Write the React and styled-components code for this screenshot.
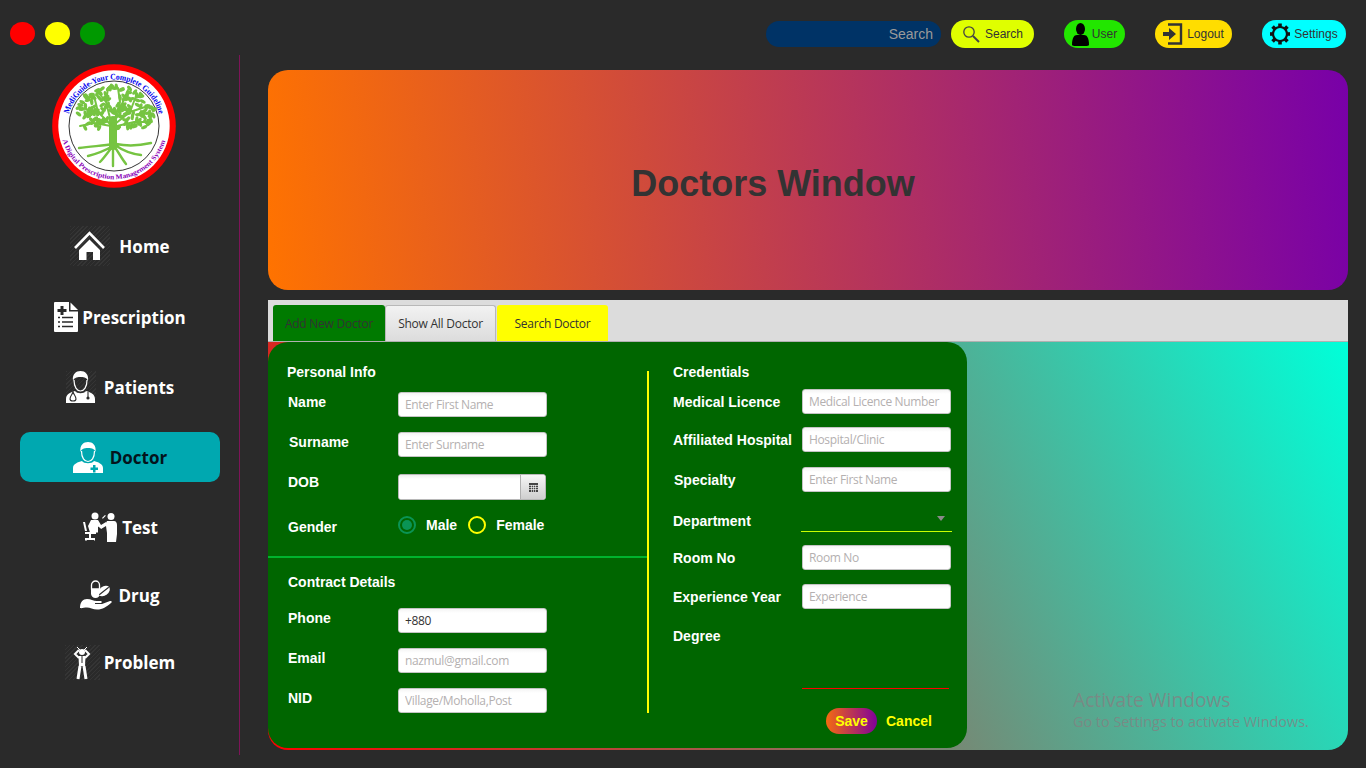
import React from "react";
import styled, { createGlobalStyle } from "styled-components";

const GlobalStyle = createGlobalStyle`
  html, body {
    margin: 0;
    height: 768px;
    overflow: hidden;
    background: #2a2a2a;
  }
  * { box-sizing: border-box; }
`;

const arial = `"Liberation Sans", Arial, sans-serif`;
const segoe = `"Open Sans", "Noto Sans", sans-serif`;

/* top bar */
const TopBar = styled.header`
  display: flex;
  align-items: center;
  height: 55px;
  padding: 20px 20px 7px 10px;
`;

const Dot = styled.span`
  width: 25px;
  height: 23px;
  border-radius: 50%;
  margin: 0 10px 1px 0;
  background: ${(p) => p.$color};
`;

const SearchPill = styled.div`
  width: 175px;
  height: 26px;
  margin-left: auto;
  padding-right: 8px;
  border-radius: 13px;
  background: #003366;
  color: #9a9a9a;
  font: 14px/26px ${arial};
  text-align: right;
`;

const TopButton = styled.button`
  display: flex;
  align-items: center;
  justify-content: center;
  gap: ${(p) => p.$gap}px;
  width: ${(p) => p.$w}px;
  height: 28px;
  margin-left: ${(p) => p.$left}px;
  padding: 0;
  border: 0;
  border-radius: 14px;
  background: ${(p) => p.$bg};
  color: #333;
  font: 12px ${arial};
`;

/* page body */
const Body = styled.div`
  display: grid;
  grid-template-columns: 240px 1fr;
`;

const Sidebar = styled.aside`
  height: 700px;
  border-right: 1px solid #7d1458;
`;

const Logo = styled.svg`
  display: block;
  width: 124px;
  height: 124px;
  margin: 9px 0 33px 52px;
`;

const Nav = styled.nav`
  display: flex;
  flex-direction: column;
  width: 200px;
  margin-left: 20px;
`;

const NavItem = styled.a`
  display: flex;
  align-items: center;
  justify-content: center;
  gap: ${(p) => p.$gap}px;
  height: 50px;
  margin-bottom: ${(p) => p.$after}px;
  border-radius: 10px;
  background: ${(p) => (p.$active ? "#00a8b0" : "transparent")};
  color: ${(p) => (p.$active ? "#04141c" : "#fff")};
  font: 700 17px ${segoe};
`;

const NavIcon = styled.svg`
  flex: none;
  background: ${(p) =>
    p.$hatch
      ? "repeating-linear-gradient(135deg, rgba(255,255,255,.05) 0 1px, transparent 1px 3px)"
      : "none"};
`;

const Main = styled.main`
  padding: 15px 18px 0 28px;
`;

const Banner = styled.section`
  display: flex;
  align-items: center;
  justify-content: center;
  height: 220px;
  margin-bottom: 10px;
  padding-right: 70px;
  border-radius: 20px;
  background: linear-gradient(84deg, #ff7300, #7800a8);
`;

const Title = styled.h1`
  margin: 7px 0 0;
  color: #333;
  font: bold 36px ${arial};
`;

/* tabs */
const TabBar = styled.div`
  display: flex;
  height: 42px;
  padding: 5px 0 0 5px;
  background: #dcdcdc;
  border-bottom: 1px solid #b0b0b0;
`;

const Tab = styled.div`
  display: flex;
  align-items: center;
  justify-content: center;
  width: ${(p) => p.$w}px;
  height: 36px;
  margin-right: ${(p) => p.$after}px;
  border: ${(p) => (p.$plain ? "1px solid #b8b8b8" : "0")};
  border-bottom: 0;
  border-radius: 3px 3px 0 0;
  background: ${(p) => p.$bg};
  color: ${(p) => p.$color};
  font: 12px ${segoe};
  letter-spacing: -0.25px;
`;

/* form panel */
const Panel = styled.section`
  position: relative;
  height: 408px;
  border-radius: 0 0 20px 20px;
  background: linear-gradient(64deg, #ff0000, #00ffd9);
`;

const FormCard = styled.form`
  display: grid;
  grid-template-columns: 379px 2px 1fr;
  width: 699px;
  height: 406px;
  border-radius: 20px;
  background: #006600;
`;

const Column = styled.div`
  padding-top: 22px;
`;

const Block = styled.div`
  padding-left: 20px;
`;

const Heading = styled.div`
  margin: ${(p) => p.$top || 0}px 0 0 ${(p) => p.$left || 0}px;
  color: #fff;
  font: bold 14px/16px ${arial};
`;

const Row = styled.div`
  display: grid;
  grid-template-columns: 110px 149px;
  align-items: start;
  height: ${(p) => p.$h || 25}px;
  margin-top: ${(p) => p.$top}px;
`;

const Label = styled.label`
  margin: ${(p) => p.$dy || 0}px 0 0 ${(p) => p.$dx || 0}px;
  color: #fff;
  font: bold 14px/20px ${arial};
  white-space: nowrap;
`;

const Input = styled.input`
  width: ${(p) => p.$w || 149}px;
  height: 25px;
  padding: 0 6px;
  border: 1px solid #c4c4c4;
  border-radius: 3px;
  background: linear-gradient(#f4f4f4, #fff 4px);
  color: #333;
  font: 12px ${segoe};
  letter-spacing: -0.35px;
  outline: none;
  &::placeholder { color: #b4b0b0; opacity: 1; }
`;

const DateField = styled.div`
  display: flex;
  width: 148px;
  height: 26px;
  border: 1px solid #b8b8b8;
  border-radius: 3px;
  overflow: hidden;
  background: #fff;
`;

const DateText = styled.div`
  flex: 1;
  background: linear-gradient(#eee, #fff 4px);
`;

const DateButton = styled.div`
  display: flex;
  align-items: center;
  justify-content: center;
  width: 25px;
  border-left: 1px solid #b0b0b0;
  background: linear-gradient(#f6f6f6, #cfcfcf);
`;

const RadioGroup = styled.div`
  display: flex;
  align-items: center;
  height: 20px;
  color: #fff;
  font: bold 14px ${arial};
`;

const Radio = styled.span`
  display: flex;
  align-items: center;
  justify-content: center;
  width: 18px;
  height: 18px;
  margin: 0 10px 0 ${(p) => p.$left || 0}px;
  border: 2px solid ${(p) => p.$color};
  border-radius: 50%;
  &::after {
    content: "";
    width: 10px;
    height: 10px;
    border-radius: 50%;
    background: ${(p) => (p.$checked ? p.$color : "transparent")};
  }
`;

const Divider = styled.div`
  height: 2px;
  margin-top: 21px;
  background: #00b32d;
`;

const VerticalLine = styled.div`
  width: 2px;
  height: 342px;
  margin-top: 29px;
  background: #ffff00;
`;

const RightColumn = styled(Column)`
  padding-left: 24px;
`;

const RightRow = styled.div`
  display: grid;
  grid-template-columns: 129px 149px;
  align-items: center;
  height: ${(p) => p.$h || 25}px;
  margin-top: ${(p) => p.$top}px;
`;

const SelectBox = styled.div`
  display: flex;
  align-items: center;
  justify-content: flex-end;
  width: 151px;
  height: 22px;
  margin-left: -1px;
  padding: 0 7px 4px 0;
  border-bottom: 1px solid #c8ff00;
`;

const Caret = styled.span`
  width: 0;
  height: 0;
  border-left: 4px solid transparent;
  border-right: 4px solid transparent;
  border-top: 5px solid #8a8a8a;
`;

const DegreeRow = styled.div`
  display: grid;
  grid-template-columns: 129px 147px;
  height: 63px;
  margin-top: 17px;
`;

const DegreeBox = styled.div`
  border-bottom: 1px solid #ff0000;
`;

const Actions = styled.div`
  display: flex;
  align-items: center;
  gap: 9px;
  margin: 19px 0 0 153px;
  font: bold 14px ${arial};
  color: #ffff00;
`;

const SaveButton = styled.div`
  width: 51px;
  height: 26px;
  border-radius: 13px;
  background: linear-gradient(to right, #f56a10, #80009a);
  line-height: 26px;
  text-align: center;
`;

const Watermark = styled.div`
  position: absolute;
  left: 805px;
  top: 345px;
  color: rgba(130, 130, 130, 0.8);
  font: 14.4px/20px ${segoe};
  strong {
    display: block;
    font-size: 19.2px;
    font-weight: 400;
    line-height: 25px;
  }
`;

/* drawings */
const HomeIcon = () => (
  <NavIcon $hatch width="40" height="40" viewBox="0 0 40 40" fill="#fff">
    <path d="M5 22 19.500 7 34 22" fill="none" stroke="#fff" strokeWidth="2.600" />
    <path d="M9 24 19.500 13.500 30 24v10h-7v-8h-6.500v8H9z" />
  </NavIcon>
);

const PrescriptionIcon = () => (
  <NavIcon width="24" height="30" viewBox="0 0 24 30" fill="#fff">
    <path d="M1 0h14v9.500h9V29a1 1 0 0 1-1 1H1a1 1 0 0 1-1-1V1a1 1 0 0 1 1-1z" />
    <path d="M16.500 0.500 24 8h-7.500z" />
    <path d="M6.500 4h3v3h3v3h-3v3h-3v-3h-3V7h3z" fill="#2a2a2a" />
    <path d="M8 15.500h11M8 20h11M8 24.500h11M4 15.500h2M4 20h2M4 24.500h2" stroke="#2a2a2a" strokeWidth="1.300" />
  </NavIcon>
);

const PatientsIcon = () => (
  <NavIcon $hatch width="30" height="32" viewBox="0 0 30 32" fill="#fff">
    <path d="M7 10C6 3 10 0 14.500 0S23 3 22 10c-1-3-3-4-7.500-4S8 7 7 10z" />
    <path d="M8 9c0 7 3 11 6.500 11S21 16 21 9" fill="none" stroke="#fff" strokeWidth="1.200" />
    <path d="M0 32v-4c0-5 5-7 9-8 2 3 9 3 11 0 4 1 9 3 9 8v4z" />
    <path d="M7 21c-1 3-3 4-3 7 0 2 2 2 3 2s3 0 3-2c0-3-2-4-3-7zM22 21v5" fill="none" stroke="#2a2a2a" strokeWidth="1.100" />
    <circle cx="22" cy="27" r="1.600" fill="#2a2a2a" />
  </NavIcon>
);

const DoctorIcon = () => (
  <NavIcon width="30" height="31" viewBox="0 0 30 31" fill="#fff">
    <path d="M7.500 10C6.500 3 10.500 0 15 0s8.500 3 7.500 10c-1-3-3-4-7.500-4s-6.500 1-7.500 4z" />
    <path d="M8.500 9c0 7 3 10.500 6.500 10.500S21.500 16 21.500 9" fill="none" stroke="#fff" strokeWidth="1.200" />
    <path d="M0 31v-5c0-4 5-6 9-7 2 3 10 3 12 0 4 1 9 3 9 7v5z" />
    <path d="M20 23h2.500v2.500H25V28h-2.500v2.500H20V28h-2.500v-2.500H20z" fill="#00a8b0" />
  </NavIcon>
);

const TestIcon = () => (
  <NavIcon width="36" height="30" viewBox="0 0 36 30" fill="#fff">
    <circle cx="13" cy="4" r="3.500" />
    <circle cx="29" cy="4.500" r="3.500" />
    <path d="M9 8h7l3 5 5-3 1 1.500-6 5-3-2v6h-8L6 14z" />
    <path d="M25 9h7c2 0 3 2 3 4v9l-1 8h-9v-9l-1-7-5 3-1-2 6-4z" />
    <path d="M3 20h11v2H9v4h4v2.500H12V28H5v.5H3V26h4v-4H3z" />
    <path d="M1 10h2l2 9H3z" />
    <path d="M20 6l3-3 .8.800-3 3z" />
  </NavIcon>
);

const DrugIcon = () => (
  <NavIcon width="32" height="30" viewBox="0 0 32 30" fill="#fff">
    <path d="M11.500 5a4 4 0 0 1 8 0v4h-8z" fill="none" stroke="#fff" strokeWidth="1.300" />
    <path d="M11 9h9v4.500a4.500 4.500 0 0 1-9 0z" />
    <g transform="rotate(-38 24 11)">
      <ellipse cx="24" cy="11" rx="6.500" ry="4.500" />
      <path d="M18 11h12" stroke="#2a2a2a" strokeWidth="1.100" />
    </g>
    <path d="M0 28c0-6 3-9 7-9 4 0 6 2 10 2h3c2 0 2.500 1.500 1 2h-6v1h7l8-3c1.500-.4 2.500 1 1 2-5 4-8 6.500-14 6.500-4 0-7-2-10-2-3 0-5 1-7 .5z" />
  </NavIcon>
);

const ProblemIcon = () => (
  <NavIcon $hatch width="35" height="35" viewBox="0 0 35 35" fill="none" stroke="#fff">
    <circle cx="17" cy="7" r="3" fill="#fff" stroke="none" />
    <path d="M12 2l3 3M22 2l-3 3" strokeWidth="1" />
    <path d="M14 5 10 9l4 4M20 5l4 4-4 4" strokeWidth="2" />
    <path d="M13.500 11h7l-.5 10h-6z" fill="#fff" strokeWidth="0" />
    <path d="M15 21l-2 13M19 21l2 13" strokeWidth="3" />
    <path d="M17 11v7" stroke="#2a2a2a" strokeWidth="1" />
  </NavIcon>
);

const SearchIcon = () => (
  <svg width="18" height="18" viewBox="0 0 18 18" fill="none" stroke="#444">
    <circle cx="7" cy="7" r="5.200" strokeWidth="1.300" />
    <path d="M11 11l6 6" strokeWidth="2" />
  </svg>
);

const UserIcon = () => (
  <svg width="17" height="23" viewBox="0 0 17 23" fill="#000">
    <ellipse cx="8.500" cy="6" rx="4.500" ry="6" />
    <path d="M0 22c0-7 2-10 5-10h7c3 0 5 3 5 10 0 1-3 1-8.500 1S0 23 0 22z" />
  </svg>
);

const LogoutIcon = () => (
  <svg width="20" height="22" viewBox="0 0 20 22" fill="#333">
    <path d="M5 1.500h13v19H5" fill="none" stroke="#333" strokeWidth="2.400" />
    <path d="M0 9h6V5l7 6-7 6v-4H0z" />
  </svg>
);

const GearIcon = () => (
  <svg width="20" height="22" viewBox="-10 -11 20 22" fill="#111">
    {[0, 45, 90, 135, 180, 225, 270, 315].map((deg) => (
      <rect key={deg} x="-1.800" y="-10.500" width="3.600" height="4" transform={`rotate(${deg})`} />
    ))}
    <circle r="7" fill="none" stroke="#111" strokeWidth="2.200" />
  </svg>
);

const CalendarIcon = () => (
  <svg width="9" height="9" viewBox="0 0 9 9">
    <rect width="9" height="9" fill="#444" />
    <path d="M0 2.500h9M0 4.500h9M0 6.500h9M2.500 2v7M4.500 2v7M6.500 2v7" stroke="#fff" strokeWidth=".6" />
  </svg>
);

// small seeded scatter so the canopy does not look like a grid
const leaves = [];
let seed = 11;
const rnd = () => {
  seed = (seed * 16807) % 2147483647;
  return seed / 2147483647;
};
for (let i = 0; i < 190; i++) {
  const a = rnd() * Math.PI * 2;
  const r = Math.sqrt(rnd());
  const x = 2 + Math.cos(a) * r * 39;
  const y = -13 + Math.sin(a) * r * 27;
  if (y > 2 && Math.abs(x) < 24) continue;
  leaves.push({ x, y, rot: rnd() * 180 });
}

const TreeLogo = () => (
  <Logo viewBox="-62 -62 124 124">
    <defs>
      <path id="arc-top" d="M-45-12A46.600 46.600 0 0 1 45-12" />
      <path id="arc-bottom" d="M-51.500 14A53.400 53.400 0 0 0 51.500 14" />
    </defs>
    <circle r="61.800" fill="#ff0000" />
    <circle r="55.700" fill="#fff" />
    <circle r="45" fill="none" stroke="#000" strokeWidth=".8" />
    <g fill="none" stroke="#76c442" strokeLinecap="round">
      <path d="M-1 20V-6" strokeWidth="8" />
      <path d="M-2 0-16-14-32-18M-16-14-20-30M-3-4-8-24-6-38M0-4 6-24 4-38M1-2 16-14 34-20M16-14 22-30M3 0 20-4 36-4M-3 0-20-3-34 0M8-22 14-36M-8-24-16-34" strokeWidth="2" />
      <path d="M-1 18C-10 20-22 20-35 22M-1 20C-8 24-18 28-26 30M-1 20C-6 26-10 32-14 36M-1 20V40M0 20C5 27 8 33 12 38M1 19C8 24 18 28 27 29M2 18C12 20 24 20 37 17" strokeWidth="2.400" />
    </g>
    <g fill="#76c442">
      {leaves.map((l, i) => (
        <ellipse key={i} cx={l.x} cy={l.y} rx="3.200" ry="1.700" transform={`rotate(${l.rot} ${l.x} ${l.y})`} />
      ))}
    </g>
    <text fill="#0000ee" fontFamily="Liberation Serif, serif" fontWeight="700" fontSize="8.400">
      <textPath href="#arc-top" textLength="122" lengthAdjust="spacingAndGlyphs">
        MediGuide-Your Complete Guideline
      </textPath>
    </text>
    <text fill="#8a00b8" fontFamily="Liberation Serif, serif" fontWeight="700" fontSize="7">
      <textPath href="#arc-bottom" textLength="138" lengthAdjust="spacingAndGlyphs">
        A Digital Prescription Management System
      </textPath>
    </text>
  </Logo>
);

const navItems = [
  { text: "Home", icon: <HomeIcon />, gap: 9, after: 21 },
  { text: "Prescription", icon: <PrescriptionIcon />, gap: 4, after: 20 },
  { text: "Patients", icon: <PatientsIcon />, gap: 8, after: 20 },
  { text: "Doctor", icon: <DoctorIcon />, gap: 7, after: 20, active: true },
  { text: "Test", icon: <TestIcon />, gap: 4, after: 18 },
  { text: "Drug", icon: <DrugIcon />, gap: 6, after: 17 },
  { text: "Problem", icon: <ProblemIcon />, gap: 4, after: 0 },
];

export default function App() {
  return (
    <>
      <GlobalStyle />
      <TopBar>
        <Dot $color="#ff0000" />
        <Dot $color="#ffff00" />
        <Dot $color="#009900" />
        <SearchPill>Search</SearchPill>
        <TopButton $w={83} $left={10} $gap={5} $bg="#dfff00">
          <SearchIcon />
          Search
        </TopButton>
        <TopButton $w={61} $left={30} $gap={3} $bg="#22e600">
          <UserIcon />
          User
        </TopButton>
        <TopButton $w={77} $left={30} $gap={4} $bg="#ffdd00">
          <LogoutIcon />
          Logout
        </TopButton>
        <TopButton $w={84} $left={30} $gap={4} $bg="#00ffff">
          <GearIcon />
          Settings
        </TopButton>
      </TopBar>

      <Body>
        <Sidebar>
          <TreeLogo />
          <Nav>
            {navItems.map((item) => (
              <NavItem key={item.text} $gap={item.gap} $after={item.after} $active={item.active}>
                {item.icon}
                {item.text}
              </NavItem>
            ))}
          </Nav>
        </Sidebar>

        <Main>
          <Banner>
            <Title>Doctors Window</Title>
          </Banner>

          <TabBar>
            <Tab $w={112} $after={0} $bg="#007a00" $color="#333">Add New Doctor</Tab>
            <Tab $w={111} $after={1} $plain $bg="linear-gradient(#f2f2f2, #dcdcdc)" $color="#333">Show All Doctor</Tab>
            <Tab $w={111} $after={0} $bg="#ffff00" $color="#333">Search Doctor</Tab>
          </TabBar>

          <Panel>
            <FormCard>
              <Column>
                <Block>
                  <Heading $left={-1}>Personal Info</Heading>
                  <Row $top={12}>
                    <Label>Name</Label>
                    <Input placeholder="Enter First Name" />
                  </Row>
                  <Row $top={15}>
                    <Label $dx={1}>Surname</Label>
                    <Input placeholder="Enter Surname" />
                  </Row>
                  <Row $top={17} $h={26}>
                    <Label $dy={-2}>DOB</Label>
                    <DateField>
                      <DateText />
                      <DateButton><CalendarIcon /></DateButton>
                    </DateField>
                  </Row>
                  <Row $top={15} $h={20}>
                    <Label $dy={2}>Gender</Label>
                    <RadioGroup>
                      <Radio $checked $color="#0a9455" />
                      Male
                      <Radio $left={11} $color="#ffff00" />
                      Female
                    </RadioGroup>
                  </Row>
                </Block>
                <Divider />
                <Block>
                  <Heading $top={16}>Contract Details</Heading>
                  <Row $top={18}>
                    <Label>Phone</Label>
                    <Input defaultValue="+880" />
                  </Row>
                  <Row $top={15}>
                    <Label>Email</Label>
                    <Input placeholder="nazmul@gmail.com" />
                  </Row>
                  <Row $top={15}>
                    <Label>NID</Label>
                    <Input placeholder="Village/Moholla,Post" />
                  </Row>
                </Block>
              </Column>

              <VerticalLine />

              <RightColumn>
                <Heading>Credentials</Heading>
                <RightRow $top={9}>
                  <Label>Medical Licence</Label>
                  <Input placeholder="Medical Licence Number" />
                </RightRow>
                <RightRow $top={13}>
                  <Label>Affiliated Hospital</Label>
                  <Input placeholder="Hospital/Clinic" />
                </RightRow>
                <RightRow $top={15}>
                  <Label $dx={1}>Specialty</Label>
                  <Input placeholder="Enter First Name" />
                </RightRow>
                <RightRow $top={18} $h={22}>
                  <Label>Department</Label>
                  <SelectBox><Caret /></SelectBox>
                </RightRow>
                <RightRow $top={13}>
                  <Label>Room No</Label>
                  <Input placeholder="Room No" />
                </RightRow>
                <RightRow $top={14}>
                  <Label>Experience Year</Label>
                  <Input placeholder="Experience" />
                </RightRow>
                <DegreeRow>
                  <Label>Degree</Label>
                  <DegreeBox />
                </DegreeRow>
                <Actions>
                  <SaveButton>Save</SaveButton>
                  Cancel
                </Actions>
              </RightColumn>
            </FormCard>
            <Watermark>
              <strong>Activate Windows</strong>
              Go to Settings to activate Windows.
            </Watermark>
          </Panel>
        </Main>
      </Body>
    </>
  );
}
